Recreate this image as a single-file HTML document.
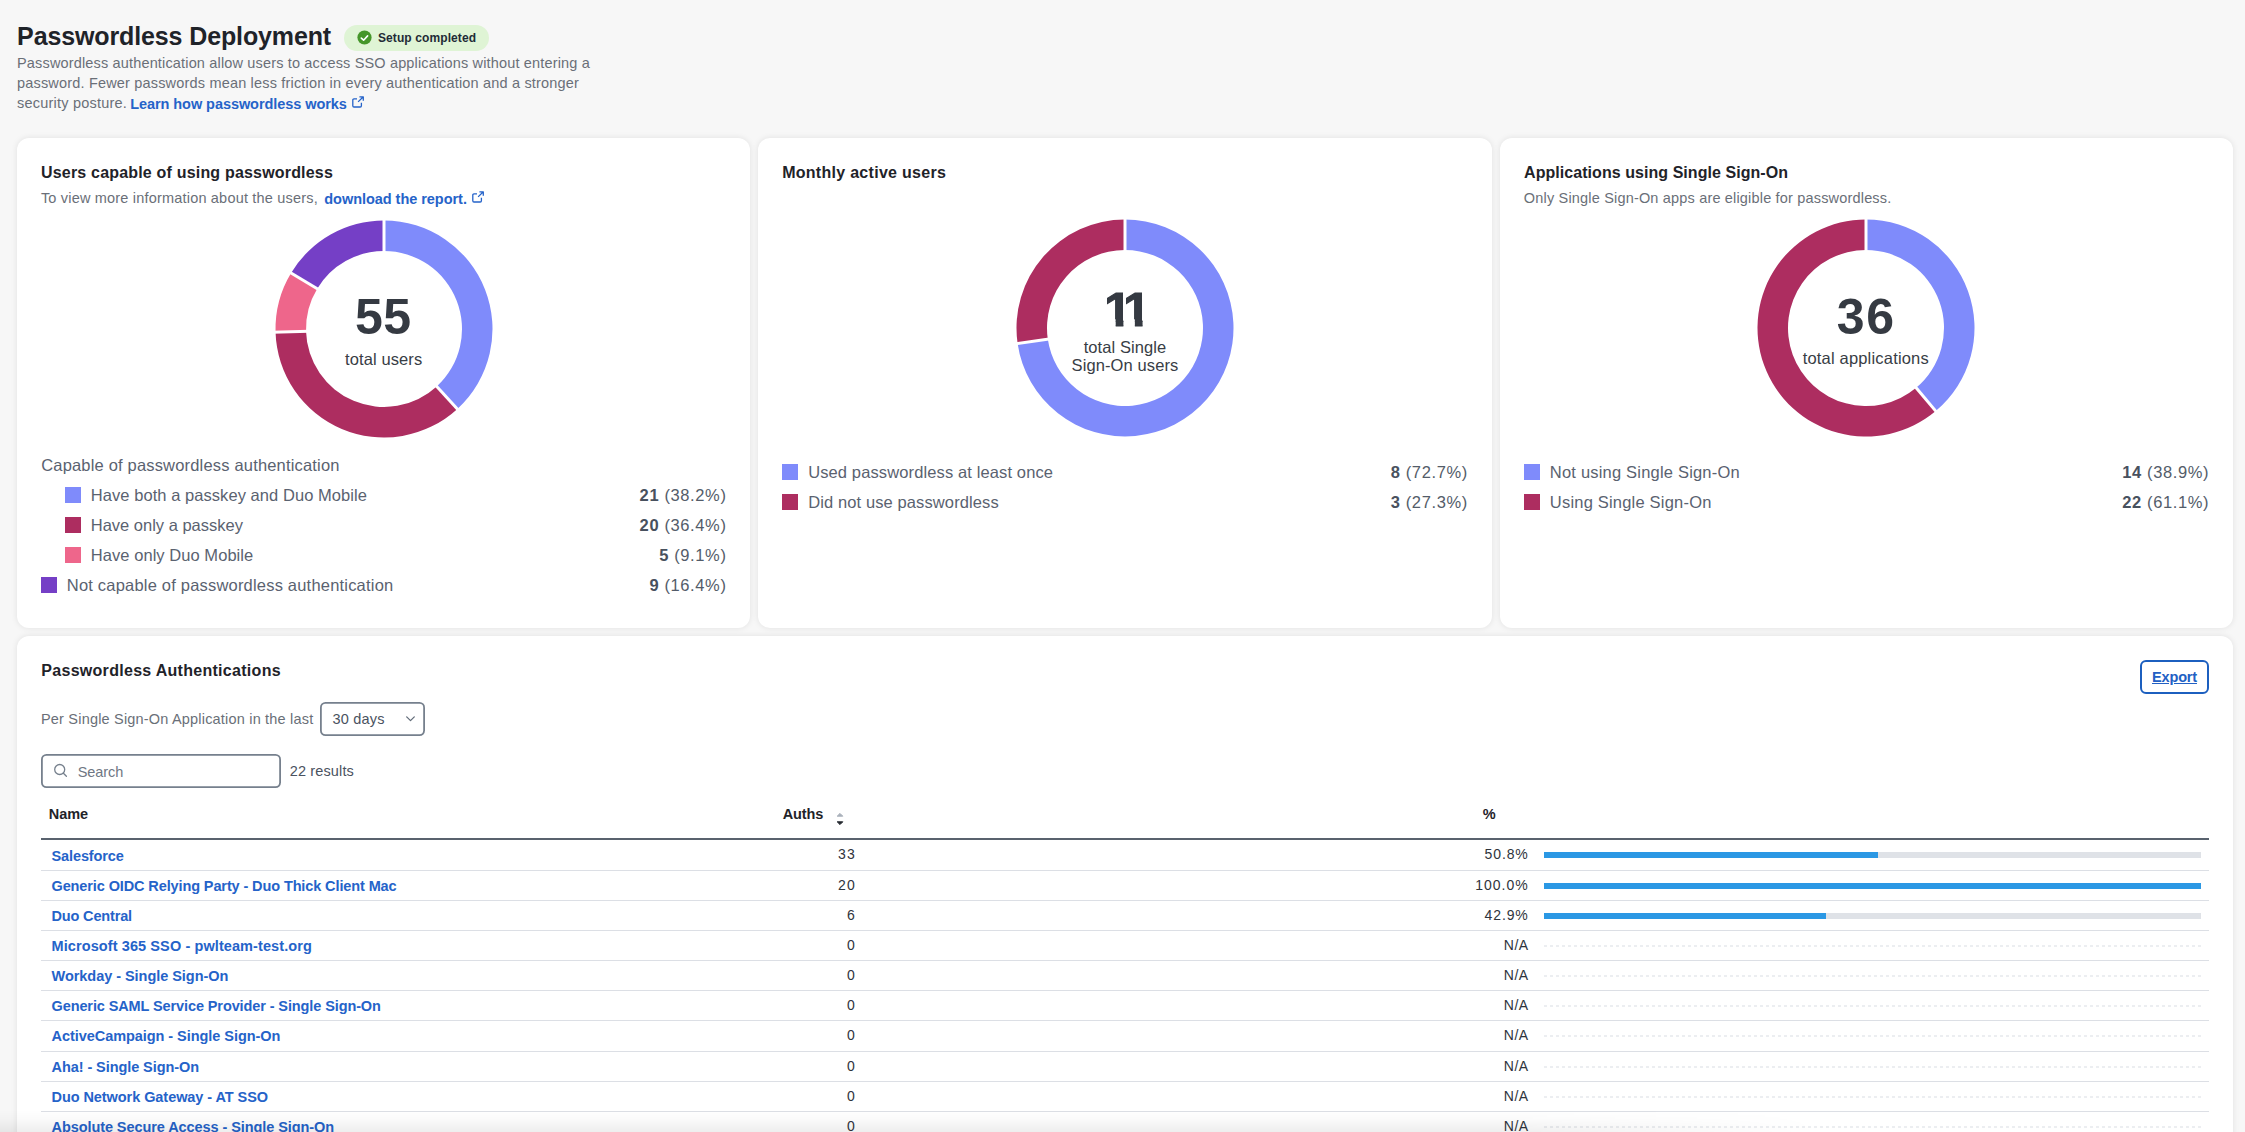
<!DOCTYPE html><html lang="en"><head><meta charset="utf-8"><title>Passwordless Deployment</title><style>*{box-sizing:border-box;margin:0;padding:0}
html,body{width:2245px;height:1132px;overflow:hidden}
body{background:#f7f7f7;font-family:"Liberation Sans",sans-serif;color:#23272e;position:relative}
h1,h2,p,span,a,label,th,td{white-space:nowrap}
h1,h2,.t{position:absolute}
h1{font-weight:700;color:#1f2329}
h2{font-weight:700;color:#1f2329}
.muted{color:#6a6f78}
a{color:#2563c9;font-weight:700;text-decoration:none}
.badge{position:absolute;left:343.9px;top:24.8px;width:145.3px;height:26.2px;border-radius:13.1px;background:#dff4d5}
.badge svg{position:absolute;left:13.6px;top:5.6px}
.badge span{position:absolute;font-weight:700;color:#222b36}
.card{position:absolute;background:#fff;border-radius:12px;box-shadow:0 0 6px rgba(0,0,0,.095)}
.donut{position:absolute}
.num{position:absolute;font-weight:700;color:#353a42;text-align:center}
.cap{position:absolute;color:#383d45;text-align:center}
.lg{color:#5a6270}
.sw{position:absolute;width:16px;height:16px}
.val{color:#535c69;letter-spacing:.62px}
.val b{color:#48515e}
.ext{position:absolute}
.export{position:absolute;width:69px;height:34px;border:2px solid #1c5fbf;border-radius:6px;text-align:center;font-size:14.5px;line-height:30.6px;text-decoration:underline;color:#2260c4}
.select{position:absolute;width:105px;height:33.6px;box-shadow:inset 0 0 0 1.8px #76808d;border-radius:5.5px;color:#4a5260}
.search{position:absolute;width:239.5px;height:33.7px;box-shadow:inset 0 0 0 1.8px #76808d;border-radius:5.5px}
.ph{color:#6f7783}
.res{color:#4a5260}
table{position:absolute;width:2168px;border-collapse:collapse;table-layout:fixed}
th{height:39px;text-align:left;vertical-align:top;padding:3.9px 8px 0 7.8px;font-size:14.5px;line-height:20px;font-weight:700;color:#1f2329;border-bottom:2px solid #59626e}
th .sort{display:inline-block;vertical-align:top;margin:8px 0 0 12.5px}
td{vertical-align:top;padding:6.8px 8px 0 10.5px;font-size:14.5px;line-height:18px;border-bottom:1px solid #dcdfe5;color:#2f343c}
td:nth-child(n+2){font-size:14px;padding-left:8px;padding-top:5.05px}
td:nth-child(3){padding-left:0}
td .n{display:inline-block;width:72.7px;text-align:right}
td .pct{display:inline-block;width:53.6px;text-align:right;margin-right:15.4px}
.bar{display:inline-block;width:657px;height:6px;background:#dfe2e7;vertical-align:top;margin-top:7.85px}
tbody tr:first-child .bar{margin-top:6.85px}
.bar i{display:block;height:6px;background:#2b98e4}
.na{display:inline-block;width:657px;height:2px;vertical-align:top;margin-top:9.85px;background:repeating-linear-gradient(90deg,#eceef1 0 3px,transparent 3px 6px)}
tbody tr:first-child td:first-child{padding-top:7.4px}
.ones{text-align:left;white-space:nowrap}
.ones span{display:inline-block;margin-right:-8.1px;-webkit-text-stroke:1.2px #353a42;clip-path:polygon(0 0,19.2px 0,19.2px 47.7px,11.5px 47.7px,11.5px 40px,0 40px)}
.shade{position:absolute;left:0;top:1110px;width:1820px;height:22px;background:linear-gradient(to bottom,rgba(0,0,0,0),rgba(0,0,0,.02) 45%,rgba(0,0,0,.065));-webkit-mask-image:linear-gradient(to right,#000 82%,transparent);mask-image:linear-gradient(to right,#000 82%,transparent);pointer-events:none}
</style></head><body>
<header>
<h1 style="left:17.1px;top:19.84px;font-size:25px;line-height:32px;letter-spacing:-0.122px;">Passwordless Deployment</h1>
<div class="badge"><svg width="15" height="15" viewBox="0 0 15 15"><circle cx="7.5" cy="7.5" r="7.1" fill="#45962a"/><path d="M4.3 8.1 6.6 10.2 10.6 5.9" fill="none" stroke="#fff" stroke-width="1.6" stroke-linecap="round" stroke-linejoin="round"/></svg>
<span style="left:34px;top:4.94px;font-size:12px;line-height:16px;letter-spacing:0.107px;">Setup completed</span>
</div>
<p class="t muted" style="left:17px;top:52.98px;font-size:14.5px;line-height:20px;letter-spacing:0.160px;">Passwordless authentication allow users to access SSO applications without entering a</p>
<p class="t muted" style="left:17px;top:73.18px;font-size:14.5px;line-height:20px;letter-spacing:0.178px;">password. Fewer passwords mean less friction in every authentication and a stronger</p>
<p class="t muted" style="left:17px;top:92.78px;font-size:14.5px;line-height:20px;letter-spacing:0.212px;">security posture.</p>
<a class="t" style="left:130.2px;top:93.88px;font-size:14.5px;line-height:20px;letter-spacing:-0.064px;">Learn how passwordless works</a>
<svg class="ext" style="left:352px;top:96.1px" viewBox="0 0 12 12" width="12" height="12"><path d="M5 2.9H2A1.2 1.2 0 0 0 .8 4.1V9.8A1.2 1.2 0 0 0 2 11H8.2A1.2 1.2 0 0 0 9.4 9.8V6.8M7.4.8H11.3V4.7M11.3.8 6.1 5.9" fill="none" stroke="#2563c9" stroke-width="1.3" stroke-linejoin="round"/></svg>
</header>
<section class="card" style="left:17px;top:138px;width:733.33px;height:490px">
<h2 style="left:24px;top:24.46px;font-size:16px;line-height:22px;letter-spacing:0.188px;">Users capable of using passwordless</h2>
<p class="t muted" style="left:23.9px;top:49.98px;font-size:14.5px;line-height:20px;letter-spacing:0.191px;">To view more information about the users,</p>
<a class="t" style="left:307.3px;top:51.18px;font-size:14.5px;line-height:20px;letter-spacing:-0.040px;">download the report.</a>
<svg class="ext" style="left:455px;top:53.1px" viewBox="0 0 12 12" width="12" height="12"><path d="M5 2.9H2A1.2 1.2 0 0 0 .8 4.1V9.8A1.2 1.2 0 0 0 2 11H8.2A1.2 1.2 0 0 0 9.4 9.8V6.8M7.4.8H11.3V4.7M11.3.8 6.1 5.9" fill="none" stroke="#2563c9" stroke-width="1.3" stroke-linejoin="round"/></svg>
<svg class="donut" style="left:254.85px;top:78.85px" width="224" height="224" viewBox="-112 -112 224 224" role="img"><path d="M0.00 -108.50A108.5 108.5 0 0 1 73.36 79.94L52.74 57.47A78 78 0 0 0 0.00 -78.00Z" fill="#7f8bfb"/><path d="M73.36 79.94A108.5 108.5 0 0 1 -108.46 3.10L-77.97 2.23A78 78 0 0 0 52.74 57.47Z" fill="#ad2d60"/><path d="M-108.46 3.10A108.5 108.5 0 0 1 -92.91 -56.03L-66.80 -40.28A78 78 0 0 0 -77.97 2.23Z" fill="#ee668b"/><path d="M-92.91 -56.03A108.5 108.5 0 0 1 -0.00 -108.50L-0.00 -78.00A78 78 0 0 0 -66.80 -40.28Z" fill="#753fc6"/><line x1="0.00" y1="-75.00" x2="0.00" y2="-111.50" stroke="#fff" stroke-width="3"/><line x1="50.71" y1="55.26" x2="75.39" y2="82.15" stroke="#fff" stroke-width="3"/><line x1="-74.97" y1="2.14" x2="-111.45" y2="3.18" stroke="#fff" stroke-width="3"/><line x1="-64.23" y1="-38.73" x2="-95.48" y2="-57.58" stroke="#fff" stroke-width="3"/></svg>
<div class="num" style="left:266.30px;width:200px;top:149.48px;font-size:50px;line-height:60px"><span style="letter-spacing:0.438px;">55</span></div>
<div class="cap" style="left:266.70px;width:200px;top:210.88px;font-size:16.5px;line-height:20px"><span style="letter-spacing:0.098px;">total users</span></div>
<span class="t lg" style="left:24.2px;top:315.88px;font-size:16.5px;line-height:22px;letter-spacing:0.179px;">Capable of passwordless authentication</span>
<i class="sw" style="left:48px;top:349.0px;background:#7f8bfb"></i><span class="t lg" style="left:73.8px;top:346.28px;font-size:16.5px;line-height:22px;letter-spacing:0.057px;">Have both a passkey and Duo Mobile</span><span class="t val" style="right:23.8px;top:346.28px;font-size:16.5px;line-height:22px;"><b>21</b> (38.2%)</span>
<i class="sw" style="left:48px;top:379.0px;background:#ad2d60"></i><span class="t lg" style="left:73.8px;top:376.28px;font-size:16.5px;line-height:22px;letter-spacing:-0.008px;">Have only a passkey</span><span class="t val" style="right:23.8px;top:376.28px;font-size:16.5px;line-height:22px;"><b>20</b> (36.4%)</span>
<i class="sw" style="left:48px;top:409.0px;background:#ee668b"></i><span class="t lg" style="left:73.8px;top:406.28px;font-size:16.5px;line-height:22px;letter-spacing:0.054px;">Have only Duo Mobile</span><span class="t val" style="right:23.8px;top:406.28px;font-size:16.5px;line-height:22px;"><b>5</b> (9.1%)</span>
<i class="sw" style="left:24px;top:439.0px;background:#753fc6"></i><span class="t lg" style="left:49.8px;top:436.28px;font-size:16.5px;line-height:22px;letter-spacing:0.198px;">Not capable of passwordless authentication</span><span class="t val" style="right:23.8px;top:436.28px;font-size:16.5px;line-height:22px;"><b>9</b> (16.4%)</span>
</section>
<section class="card" style="left:758.33px;top:138px;width:733.33px;height:490px">
<h2 style="left:23.8px;top:24.46px;font-size:16px;line-height:22px;letter-spacing:0.286px;">Monthly active users</h2>
<svg class="donut" style="left:254.67px;top:78.00px" width="224" height="224" viewBox="-112 -112 224 224" role="img"><path d="M0.00 -108.50A108.5 108.5 0 1 1 -107.40 15.44L-77.21 11.10A78 78 0 1 0 0.00 -78.00Z" fill="#7f8bfb"/><path d="M-107.40 15.44A108.5 108.5 0 0 1 -0.00 -108.50L-0.00 -78.00A78 78 0 0 0 -77.21 11.10Z" fill="#ad2d60"/><line x1="0.00" y1="-75.00" x2="0.00" y2="-111.50" stroke="#fff" stroke-width="3"/><line x1="-74.24" y1="10.67" x2="-110.37" y2="15.87" stroke="#fff" stroke-width="3"/></svg>
<div class="num ones" style="left:345.87px;top:141.32px;font-size:49px;line-height:60px"><span>1</span><span>1</span></div>
<div class="cap" style="left:266.67px;width:200px;top:198.88px;font-size:16.5px;line-height:20px"><span style="letter-spacing:0.080px;">total Single</span></div>
<div class="cap" style="left:266.67px;width:200px;top:217.48px;font-size:16.5px;line-height:20px"><span style="letter-spacing:0.102px;">Sign-On users</span></div>
<i class="sw" style="left:24px;top:326.0px;background:#7f8bfb"></i><span class="t lg" style="left:49.8px;top:323.28px;font-size:16.5px;line-height:22px;letter-spacing:0.122px;">Used passwordless at least once</span><span class="t val" style="right:23.8px;top:323.28px;font-size:16.5px;line-height:22px;"><b>8</b> (72.7%)</span>
<i class="sw" style="left:24px;top:356.0px;background:#ad2d60"></i><span class="t lg" style="left:49.8px;top:353.28px;font-size:16.5px;line-height:22px;letter-spacing:0.112px;">Did not use passwordless</span><span class="t val" style="right:23.8px;top:353.28px;font-size:16.5px;line-height:22px;"><b>3</b> (27.3%)</span>
</section>
<section class="card" style="left:1499.67px;top:138px;width:733.33px;height:490px">
<h2 style="left:24.4px;top:24.46px;font-size:16px;line-height:22px;letter-spacing:0.054px;">Applications using Single Sign-On</h2>
<p class="t muted" style="left:24.2px;top:49.98px;font-size:14.5px;line-height:20px;letter-spacing:0.177px;">Only Single Sign-On apps are eligible for passwordless.</p>
<svg class="donut" style="left:254.33px;top:78.00px" width="224" height="224" viewBox="-112 -112 224 224" role="img"><path d="M0.00 -108.50A108.5 108.5 0 0 1 69.74 83.12L50.14 59.75A78 78 0 0 0 0.00 -78.00Z" fill="#7f8bfb"/><path d="M69.74 83.12A108.5 108.5 0 1 1 -0.00 -108.50L-0.00 -78.00A78 78 0 1 0 50.14 59.75Z" fill="#ad2d60"/><line x1="0.00" y1="-75.00" x2="0.00" y2="-111.50" stroke="#fff" stroke-width="3"/><line x1="48.21" y1="57.45" x2="71.67" y2="85.41" stroke="#fff" stroke-width="3"/></svg>
<div class="num" style="left:266.63px;width:200px;top:148.78px;font-size:50px;line-height:60px"><span style="letter-spacing:1.688px;">36</span></div>
<div class="cap" style="left:266.13px;width:200px;top:210.08px;font-size:16.5px;line-height:20px"><span style="letter-spacing:0.188px;">total applications</span></div>
<i class="sw" style="left:24.4px;top:326.0px;background:#7f8bfb"></i><span class="t lg" style="left:50.2px;top:323.28px;font-size:16.5px;line-height:22px;letter-spacing:0.197px;">Not using Single Sign-On</span><span class="t val" style="right:23.8px;top:323.28px;font-size:16.5px;line-height:22px;"><b>14</b> (38.9%)</span>
<i class="sw" style="left:24.4px;top:356.0px;background:#ad2d60"></i><span class="t lg" style="left:50.2px;top:353.28px;font-size:16.5px;line-height:22px;letter-spacing:0.197px;">Using Single Sign-On</span><span class="t val" style="right:23.8px;top:353.28px;font-size:16.5px;line-height:22px;"><b>22</b> (61.1%)</span>
</section>
<section class="card tcard" style="left:17px;top:636px;width:2216px;height:520px">
<h2 style="left:24.3px;top:24.36px;font-size:16px;line-height:22px;letter-spacing:0.290px;">Passwordless Authentications</h2>
<a class="export" style="left:2123px;top:24px" href="#"><span style="letter-spacing:-0.154px;">Export</span></a>
<label class="t muted" style="left:24px;top:72.98px;font-size:14.5px;line-height:20px;letter-spacing:0.191px;">Per Single Sign-On Application in the last</label>
<div class="select" style="left:303.0px;top:66.2px"><span class="t" style="left:12.5px;top:6.78px;font-size:14.5px;line-height:20px;letter-spacing:0.200px;">30 days</span><svg width="11" height="8" viewBox="0 0 11 8" style="position:absolute;left:85.4px;top:13.3px"><path d="M1.7 1.9 5.5 5.6 9.3 1.9" fill="none" stroke="#626c79" stroke-width="1.3" stroke-linecap="round" stroke-linejoin="round"/></svg></div>
<div class="search" style="left:24.2px;top:118.1px"><svg width="16" height="16" viewBox="0 0 16 16" style="position:absolute;left:12px;top:9.4px"><circle cx="6.7" cy="6.5" r="5" fill="none" stroke="#76808d" stroke-width="1.3"/><path d="M10.4 10.2 13.4 13.2" stroke="#76808d" stroke-width="1.3" stroke-linecap="round"/></svg><span class="t ph" style="left:36.5px;top:7.68px;font-size:14.5px;line-height:20px;letter-spacing:-0.059px;">Search</span></div>
<span class="t res" style="left:272.7px;top:124.78px;font-size:14.5px;line-height:20px;letter-spacing:0.142px;">22 results</span>
<table style="left:24px;top:164px"><colgroup><col style="width:734px"><col style="width:700px"><col style="width:734px"></colgroup>
<thead><tr><th><span style="letter-spacing:-0.050px;">Name</span></th><th><span style="letter-spacing:-0.159px;">Auths</span><svg class="sort" width="8" height="14" viewBox="0 0 8 14"><path d="M1.2 4.2 4 1.4 6.8 4.2Z" fill="#a9b0ba" stroke="#a9b0ba" stroke-width="1" stroke-linejoin="round"/><path d="M1.2 9.8 4 12.6 6.8 9.8Z" fill="#23272e" stroke="#23272e" stroke-width="1" stroke-linejoin="round"/></svg></th><th><span style="letter-spacing:-0.906px;">%</span></th></tr></thead><tbody>
<tr style="height:31px"><td><a href="#"><span style="letter-spacing:-0.106px;">Salesforce</span></a></td><td><span class="n"><span style="letter-spacing:1.011px;">33</span></span></td><td><span class="pct"><span style="letter-spacing:0.859px;">50.8%</span></span><i class="bar"><i style="width:50.8%"></i></i></td></tr>
<tr style="height:30px"><td><a href="#"><span style="letter-spacing:-0.112px;">Generic OIDC Relying Party - Duo Thick Client Mac</span></a></td><td><span class="n"><span style="letter-spacing:1.011px;">20</span></span></td><td><span class="pct"><span style="letter-spacing:0.986px;">100.0%</span></span><i class="bar"><i style="width:100%"></i></i></td></tr>
<tr style="height:30px"><td><a href="#"><span style="letter-spacing:-0.161px;">Duo Central</span></a></td><td><span class="n"><span style="letter-spacing:0.803px;">6</span></span></td><td><span class="pct"><span style="letter-spacing:0.859px;">42.9%</span></span><i class="bar"><i style="width:42.9%"></i></i></td></tr>
<tr style="height:30px"><td><a href="#"><span style="letter-spacing:0.096px;">Microsoft 365 SSO - pwlteam-test.org</span></a></td><td><span class="n"><span style="letter-spacing:0.803px;">0</span></span></td><td><span class="pct"><span style="letter-spacing:0.485px;">N/A</span></span><i class="na"></i></td></tr>
<tr style="height:30px"><td><a href="#"><span style="letter-spacing:-0.041px;">Workday - Single Sign-On</span></a></td><td><span class="n"><span style="letter-spacing:0.803px;">0</span></span></td><td><span class="pct"><span style="letter-spacing:0.485px;">N/A</span></span><i class="na"></i></td></tr>
<tr style="height:30px"><td><a href="#"><span style="letter-spacing:-0.105px;">Generic SAML Service Provider - Single Sign-On</span></a></td><td><span class="n"><span style="letter-spacing:0.803px;">0</span></span></td><td><span class="pct"><span style="letter-spacing:0.485px;">N/A</span></span><i class="na"></i></td></tr>
<tr style="height:31px"><td><a href="#"><span style="letter-spacing:-0.052px;">ActiveCampaign - Single Sign-On</span></a></td><td><span class="n"><span style="letter-spacing:0.803px;">0</span></span></td><td><span class="pct"><span style="letter-spacing:0.485px;">N/A</span></span><i class="na"></i></td></tr>
<tr style="height:30px"><td><a href="#"><span style="letter-spacing:-0.073px;">Aha! - Single Sign-On</span></a></td><td><span class="n"><span style="letter-spacing:0.803px;">0</span></span></td><td><span class="pct"><span style="letter-spacing:0.485px;">N/A</span></span><i class="na"></i></td></tr>
<tr style="height:30px"><td><a href="#"><span style="letter-spacing:-0.066px;">Duo Network Gateway - AT SSO</span></a></td><td><span class="n"><span style="letter-spacing:0.803px;">0</span></span></td><td><span class="pct"><span style="letter-spacing:0.485px;">N/A</span></span><i class="na"></i></td></tr>
<tr style="height:30px"><td><a href="#"><span style="letter-spacing:-0.077px;">Absolute Secure Access - Single Sign-On</span></a></td><td><span class="n"><span style="letter-spacing:0.803px;">0</span></span></td><td><span class="pct"><span style="letter-spacing:0.485px;">N/A</span></span><i class="na"></i></td></tr>
</tbody></table>
</section>
<div class="shade"></div>
</body></html>
